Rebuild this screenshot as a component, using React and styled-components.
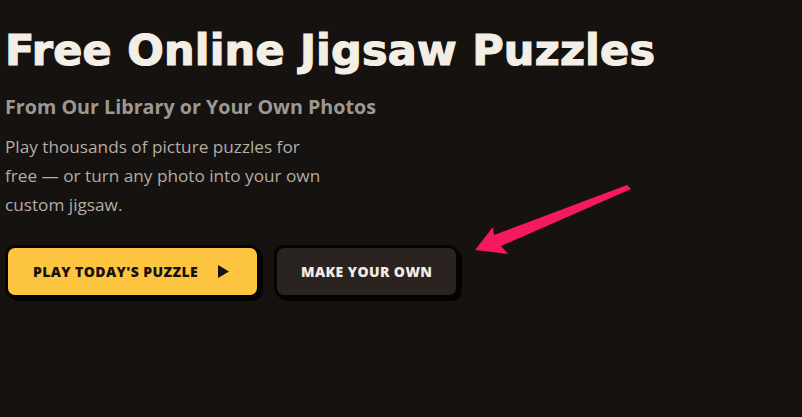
import React from "react";
import styled, { createGlobalStyle } from "styled-components";

const Global = createGlobalStyle`
  html, body {
    margin: 0;
    padding: 0;
    background: #161210;
  }
  body {
    font-family: "Open Sans", "Noto Sans", sans-serif;
  }
`;

const Page = styled.div`
  position: relative;
  width: 802px;
  height: 417px;
  overflow: hidden;
  background: #161210;
  padding: 21px 0 0 5px;
  box-sizing: border-box;
`;

const Title = styled.h1`
  margin: 0;
  font-family: "DejaVu Sans", "Open Sans", sans-serif;
  font-size: 43px;
  line-height: 58px;
  font-weight: 700;
  color: #f3efe6;
  -webkit-text-stroke: 1.2px #f3efe6;
  letter-spacing: 0.2px;
`;

const Subtitle = styled.h2`
  margin: 15px 0 0 0;
  font-size: 19.7px;
  line-height: 26px;
  font-weight: 700;
  color: #9d9992;
`;

const Lead = styled.p`
  margin: 12px 0 0 0;
  width: 330px;
  font-size: 17.2px;
  line-height: 29px;
  color: #b3ada4;
`;

const Actions = styled.div`
  display: flex;
  gap: 14px;
  margin-top: 26px;
`;

const Button = styled.button`
  display: flex;
  align-items: center;
  justify-content: center;
  gap: 20px;
  height: 53px;
  padding: 0 ${(p) => (p.$primary ? "28px 0 25px" : "24px")};
  border: 3px solid #050403;
  border-radius: 10px;
  box-shadow: 3px 3px 0 #050403;
  background: ${(p) => (p.$primary ? "#fdc53f" : "#2a231f")};
  color: ${(p) => (p.$primary ? "#15110d" : "#f1ece4")};
  font-family: "Open Sans", sans-serif;
  font-size: 14px;
  font-weight: 800;
  letter-spacing: 0.4px;
  text-transform: uppercase;
  cursor: pointer;
`;

const Play = styled.svg`
  width: 11px;
  height: 13px;
`;

// pink callout arrow pointing at "make your own"
const Arrow = styled.svg`
  position: absolute;
  left: 470px;
  top: 180px;
  width: 170px;
  height: 80px;
`;

export default function App() {
  return (
    <Page>
      <Global />
      <Title>Free Online Jigsaw Puzzles</Title>
      <Subtitle>From Our Library or Your Own Photos</Subtitle>
      <Lead>
        Play thousands of picture puzzles for free — or turn any photo into your own
        custom jigsaw.
      </Lead>
      <Actions>
        <Button $primary>
          Play Today's Puzzle
          <Play viewBox="0 0 11 13">
            <path d="M0 0 L11 6.5 L0 13 Z" fill="#15110d" />
          </Play>
        </Button>
        <Button>Make Your Own</Button>
      </Actions>
      <Arrow viewBox="470 180 170 80">
        <path
          d="M475 250 L493 227 L494 235 L627 185 L631 189 L501 246 L508 254 Z"
          fill="#f5195f"
        />
      </Arrow>
    </Page>
  );
}
